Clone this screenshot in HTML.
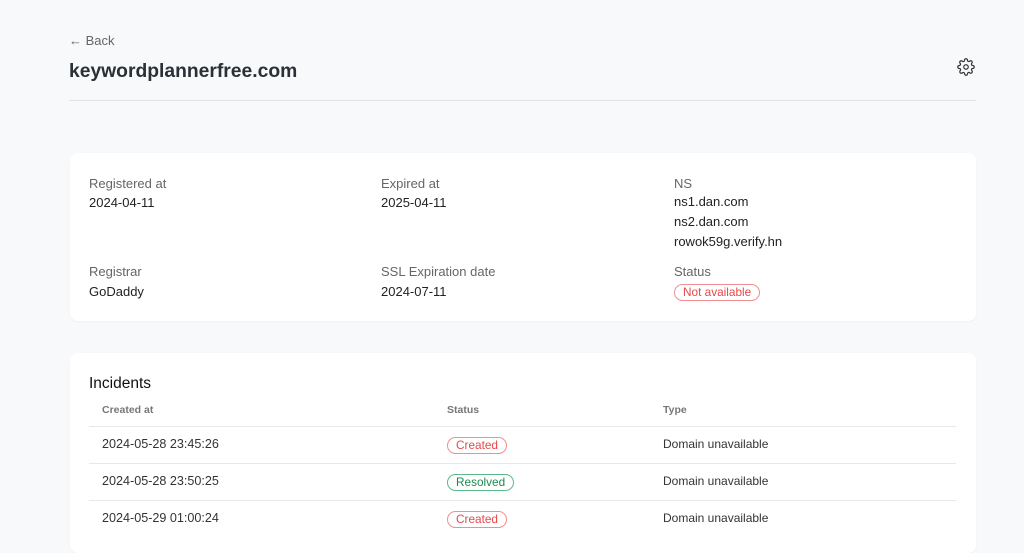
<!DOCTYPE html>
<html><head><style>
*{margin:0;padding:0;box-sizing:border-box}
body{width:1024px;height:535px;overflow:hidden;background:#f8f9fa;font-family:"Liberation Sans",sans-serif;position:relative;color:#222}
.a{position:absolute;white-space:nowrap}
.card{position:absolute;left:70px;width:906px;background:#fff;border-radius:8px;box-shadow:0 1px 2px rgba(0,0,0,.04)}
.lbl{font-size:13px;color:#666}
.val{font-size:13px;color:#222}
.badge{display:inline-block;border:1px solid;border-radius:9px;font-size:11.8px;padding:0 8px;line-height:15px}
.red{color:#e5484d;border-color:#ef8f92}
.grn{color:#1d8a55;border-color:#5bb98a}
.th{font-size:10.5px;font-weight:bold;color:#777}
.td{font-size:12px;color:#333}
.dt{font-size:12.6px;color:#333}
.ln{position:absolute;left:89px;width:867px;height:1px;background:#e8e8e8}
</style></head><body>
<div class="a" style="left:69px;top:33px;font-size:13px;color:#666">← Back</div>
<div class="a" style="left:69px;top:61px;font-size:19.3px;font-weight:bold;color:#2b2f36">keywordplannerfree.com</div>
<svg class="a" style="left:957px;top:58px" width="18" height="18" viewBox="0 0 24 24" fill="none" stroke="#333" stroke-width="1.6" stroke-linecap="round" stroke-linejoin="round"><circle cx="12" cy="12" r="3"/><path d="M19.4 15a1.65 1.65 0 0 0 .33 1.820l.06.06a2 2 0 1 1-2.83 2.83l-.06-.06a1.65 1.65 0 0 0-1.82-.33 1.65 1.65 0 0 0-1 1.51V21a2 2 0 1 1-4 0v-.09A1.65 1.65 0 0 0 9 19.4a1.65 1.65 0 0 0-1.82.33l-.06.06a2 2 0 1 1-2.83-2.83l.06-.06A1.65 1.650 0 0 0 4.68 15a1.65 1.65 0 0 0-1.51-1H3a2 2 0 1 1 0-4h.09A1.65 1.65 0 0 0 4.6 9a1.65 1.65 0 0 0-.33-1.82l-.06-.06a2 2 0 1 1 2.830-2.83l.06.06A1.65 1.65 0 0 0 9 4.68a1.65 1.65 0 0 0 1-1.51V3a2 2 0 1 1 4 0v.09a1.65 1.65 0 0 0 1 1.51 1.65 1.65 0 0 0 1.82-.33l.06-.06a2 2 0 1 1 2.83 2.83l-.06.06A1.65 1.65 0 0 0 19.4 9a1.65 1.65 0 0 0 1.51 1H21a2 2 0 1 1 0 4h-.09a1.65 1.65 0 0 0-1.51 1z"/></svg>
<div class="a" style="left:69px;top:100px;width:907px;height:1px;background:#e2e4e7"></div>

<div class="card" style="top:153px;height:168px"></div>
<div class="a lbl" style="left:89px;top:176px">Registered at</div>
<div class="a val" style="left:89px;top:195px">2024-04-11</div>
<div class="a lbl" style="left:381px;top:176px">Expired at</div>
<div class="a val" style="left:381px;top:195px">2025-04-11</div>
<div class="a lbl" style="left:674px;top:176px">NS</div>
<div class="a val" style="left:674px;top:195px;line-height:20px;margin-top:-3px">ns1.dan.com<br>ns2.dan.com<br>rowok59g.verify.hn</div>
<div class="a lbl" style="left:89px;top:264px">Registrar</div>
<div class="a val" style="left:89px;top:284px">GoDaddy</div>
<div class="a lbl" style="left:381px;top:264px">SSL Expiration date</div>
<div class="a val" style="left:381px;top:284px">2024-07-11</div>
<div class="a lbl" style="left:674px;top:264px">Status</div>
<div class="a" style="left:674px;top:283px"><span class="badge red">Not available</span></div>

<div class="card" style="top:353px;height:200px"></div>
<div class="a" style="left:89px;top:375px;font-size:15.5px;color:#111">Incidents</div>
<div class="a th" style="left:102px;top:404px">Created at</div>
<div class="a th" style="left:447px;top:404px">Status</div>
<div class="a th" style="left:663px;top:404px">Type</div>
<div class="ln" style="top:426px"></div>
<div class="ln" style="top:463px"></div>
<div class="ln" style="top:500px"></div>
<div class="a dt" style="left:102px;top:437px">2024-05-28 23:45:26</div>
<div class="a" style="left:447px;top:436px"><span class="badge red">Created</span></div>
<div class="a td" style="left:663px;top:437px">Domain unavailable</div>
<div class="a dt" style="left:102px;top:474px">2024-05-28 23:50:25</div>
<div class="a" style="left:447px;top:473px"><span class="badge grn">Resolved</span></div>
<div class="a td" style="left:663px;top:474px">Domain unavailable</div>
<div class="a dt" style="left:102px;top:511px">2024-05-29 01:00:24</div>
<div class="a" style="left:447px;top:510px"><span class="badge red">Created</span></div>
<div class="a td" style="left:663px;top:511px">Domain unavailable</div>
</body></html>
